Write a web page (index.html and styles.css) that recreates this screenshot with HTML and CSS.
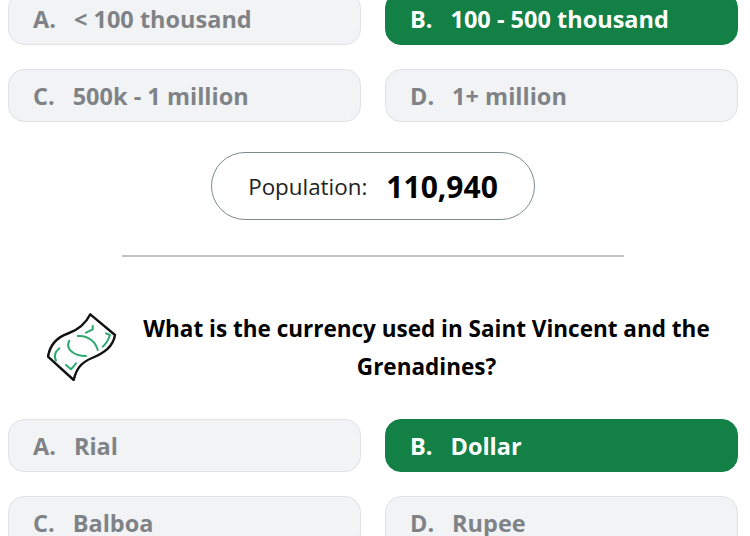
FILE: index.html
```html
<!DOCTYPE html>
<html lang="en">
<head>
    <meta charset="UTF-8">
    <title>Quiz</title>
    <link rel="stylesheet" href="styles.css">
</head>
<body>

<!-- Population question answers -->
<div class="answers first">
    <div class="answer"><span class="letter">A.</span><span>&lt; 100 thousand</span></div>
    <div class="answer correct"><span class="letter">B.</span><span>100 - 500 thousand</span></div>
    <div class="answer"><span class="letter">C.</span><span>500k - 1 million</span></div>
    <div class="answer"><span class="letter">D.</span><span>1+ million</span></div>
</div>

<div class="result-row">
    <div class="result">
        <span class="result-label">Population:</span>
        <span class="result-value">110,940</span>
    </div>
</div>

<hr class="divider">

<!-- Currency question -->
<div class="question">
    <svg class="question-icon" viewBox="0 0 70 68" width="70" height="68" fill="none" stroke-linecap="round" stroke-linejoin="round">
        <path d="M43.3 1.3 C38 12 31 17 21 20.5 C11 24 3 31 1 43.7 L26.7 67 C29 57 33 50 45 45 C57 40 66 34 68 22 Z" fill="#fff" stroke="#111" stroke-width="2.4"/>
        <g stroke="#2fa86f" stroke-width="2">
            <path d="M39 19.7 L45.7 16.3 L45.7 13"/>
            <path d="M30.7 23 C42 22 49 30 50.7 37"/>
            <path d="M22.3 27.7 C18 36 27 43 39 43"/>
            <path d="M59 20.3 L63 22 C61 28 59 31 55.7 33.7"/>
            <path d="M12.3 35.3 C8 39 6.5 43 9 47.7"/>
            <path d="M19 52 L24 56.3 L29 50.3"/>
        </g>
    </svg>
    <div class="question-text">What is the currency used in Saint Vincent and the Grenadines?</div>
</div>

<div class="answers">
    <div class="answer"><span class="letter">A.</span><span>Rial</span></div>
    <div class="answer correct"><span class="letter">B.</span><span>Dollar</span></div>
    <div class="answer"><span class="letter">C.</span><span>Balboa</span></div>
    <div class="answer"><span class="letter">D.</span><span>Rupee</span></div>
</div>

</body>
</html>
```

FILE: styles.css
```css
html, body {
    height: 536px;
    overflow: hidden;
}
body {
    margin: 0;
    padding: 0 12px 0 8px;
    background: #fff;
    font-family: "Open Sans", "Noto Sans", sans-serif;
}
.answers {
    display: grid;
    grid-template-columns: 353px 353px;
    column-gap: 24px;
    row-gap: 24px;
}
.answers.first {
    margin-top: -8px;
}
.answer {
    height: 53px;
    box-sizing: border-box;
    display: flex;
    align-items: center;
    gap: 18px;
    padding: 1px 0 0 24px;
    background: #f1f3f5;
    border: 1px solid #dee2e6;
    border-radius: 16px;
    color: #7f8387;
    font-size: 23.5px;
    font-weight: 700;
}
.answer.correct {
    background: #138046;
    border-color: #138046;
    color: #fff;
}
.result-row {
    display: flex;
    justify-content: center;
    margin-top: 30px;
}
.result {
    width: 324px;
    height: 68px;
    box-sizing: border-box;
    display: flex;
    align-items: center;
    justify-content: center;
    gap: 19px;
    border: 1px solid #7d8a8f;
    border-radius: 34px;
}
.result-label {
    font-size: 22.4px;
    font-weight: 400;
    color: #222;
}
.result-value {
    font-size: 30px;
    font-weight: 700;
    color: #000;
}
.divider {
    width: 502px;
    height: 2px;
    margin: 35px 0 0 114px;
    border: 0;
    background: #c4c4c4;
}
.question {
    display: flex;
    align-items: center;
    margin-top: 56px;
    padding-left: 39px;
    height: 68px;
}
.question-icon {
    flex: none;
}
.question-text {
    flex: 1;
    padding: 2px 28px 0 26px;
    text-align: center;
    font-size: 22.5px;
    font-weight: 700;
    line-height: 38px;
    color: #000;
}
.question + .answers {
    margin-top: 38px;
}
```
